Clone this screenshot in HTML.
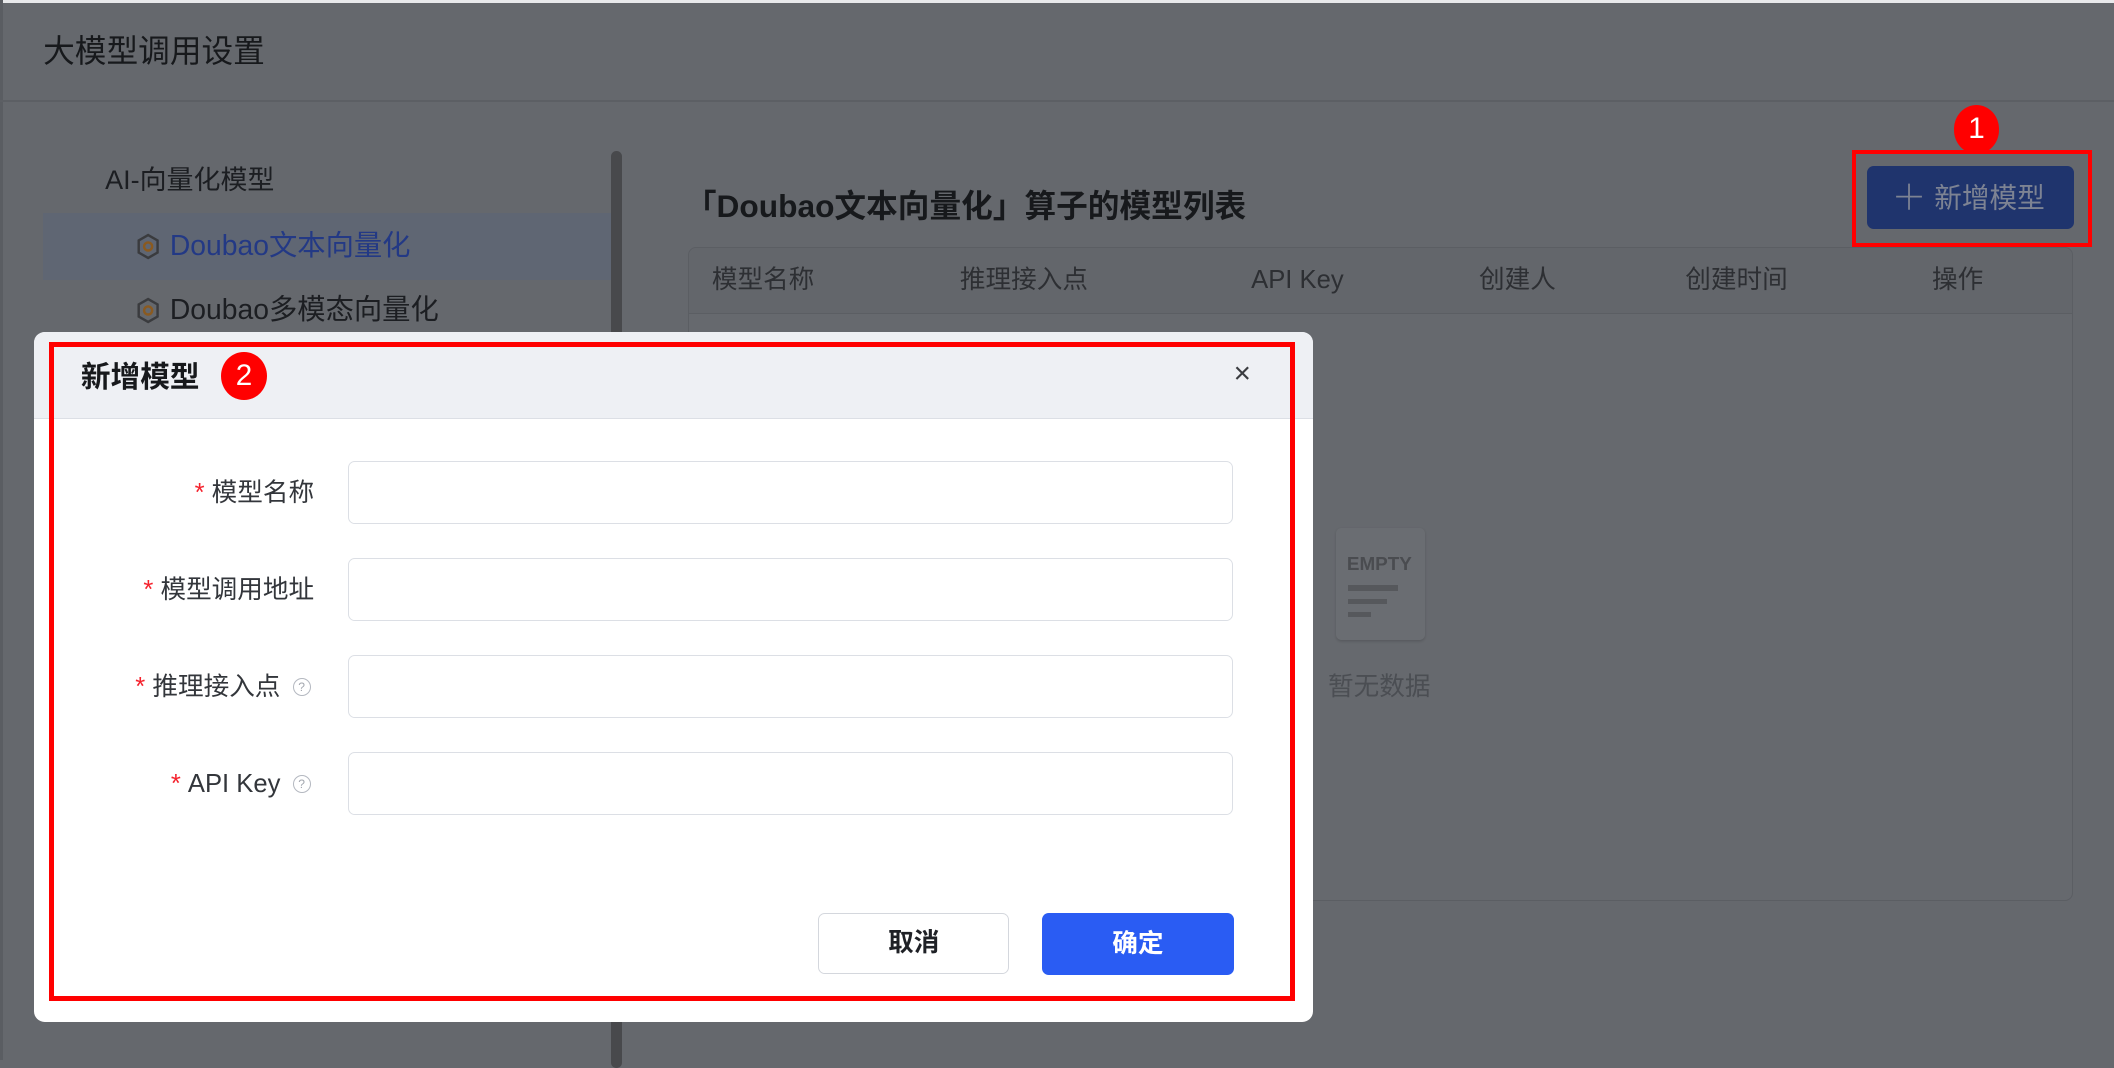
<!DOCTYPE html>
<html><head><meta charset="utf-8"><style>
html,body{margin:0;padding:0;}
body{width:1568px;height:786px;zoom:1.34821;overflow:hidden;position:relative;background:#65686d;font-family:"Liberation Sans","Noto Sans CJK SC",sans-serif;color:#1f2126;line-height:1.2;}
.a{position:absolute;}
.t{white-space:nowrap;}
.lbl{position:absolute;right:1335px;font-size:19px;color:#33363b;white-space:nowrap;line-height:24px;}
</style></head><body>
<div class="a" style="left:0;top:0;width:1568px;height:2px;background:#e8e9eb"></div>
<div class="a" style="left:0;top:0;width:2px;height:786px;background:#5a5d62"></div>
<div class="a t" style="left:32px;top:24px;font-size:23.5px;color:#17191c">大模型调用设置</div>
<div class="a" style="left:0;top:74px;width:1568px;height:2px;background:#5c5f64"></div>
<!-- sidebar -->
<div class="a t" style="left:78px;top:122px;font-size:20px;color:#1c1e22">AI-向量化模型</div>
<div class="a" style="left:32px;top:158px;width:421px;height:50px;background:#5f6673"></div>
<svg class="a" style="left:101px;top:173px" width="18" height="20" viewBox="0 0 18 20"><path d="M9 1.5L16 5.5V14.5L9 18.5L2 14.5V5.5Z" fill="none" stroke="#3a3b3e" stroke-width="1.8"/><circle cx="9" cy="10" r="3" fill="none" stroke="#8a5a20" stroke-width="1.8"/></svg>
<div class="a t" style="left:126px;top:170px;font-size:21px;color:#233985">Doubao文本向量化</div>
<svg class="a" style="left:101px;top:220px" width="18" height="20" viewBox="0 0 18 20"><path d="M9 1.5L16 5.5V14.5L9 18.5L2 14.5V5.5Z" fill="none" stroke="#3a3b3e" stroke-width="1.8"/><circle cx="9" cy="10" r="3" fill="none" stroke="#8a5a20" stroke-width="1.8"/></svg>
<div class="a t" style="left:126px;top:217px;font-size:21px;color:#1c1e22">Doubao多模态向量化</div>
<div class="a" style="left:453px;top:112px;width:8px;height:680px;background:#48494c;border-radius:4px"></div>
<!-- right -->
<div class="a t" style="left:508px;top:139px;font-size:23.5px;font-weight:bold;color:#17191c">「Doubao文本向量化」算子的模型列表</div>
<div class="a" style="left:1385px;top:123px;width:153px;height:47px;background:#1f346d;border-radius:5px"></div>
<div class="a t" style="left:1403px;top:132px;font-size:20.5px;color:#7d8393"><span style="font-size:26px;font-weight:300;vertical-align:-2px">＋</span>&nbsp;新增模型</div>
<div class="a" style="left:1374px;top:111px;width:172px;height:66px;border:3px solid #ff0000"></div>
<div class="a" style="left:1449px;top:78px;width:34px;height:36px;border-radius:50%;background:#ff0000;color:#fff;font-size:22px;text-align:center;line-height:36px">1</div>
<div class="a" style="left:510px;top:183px;width:1026px;height:484px;border:1px solid #5b5e63;border-radius:6px;background:#66696e"></div>
<div class="a" style="left:511px;top:184px;width:1026px;height:48px;background:#63666b;border-bottom:1px solid #5b5e63;border-radius:6px 6px 0 0"></div>
<div class="a t" style="left:528px;top:196px;font-size:19px;line-height:24px;color:#2d2f33">模型名称</div>
<div class="a t" style="left:712px;top:196px;font-size:19px;line-height:24px;color:#2d2f33">推理接入点</div>
<div class="a t" style="left:928px;top:196px;font-size:19px;line-height:24px;color:#2d2f33">API Key</div>
<div class="a t" style="left:1097px;top:196px;font-size:19px;line-height:24px;color:#2d2f33">创建人</div>
<div class="a t" style="left:1250px;top:196px;font-size:19px;line-height:24px;color:#2d2f33">创建时间</div>
<div class="a t" style="left:1433px;top:196px;font-size:19px;line-height:24px;color:#2d2f33">操作</div>
<div class="a" style="left:991px;top:392px;width:66px;height:83px;background:#6a6d72;border-radius:4px;box-shadow:0 1px 2px rgba(0,0,0,.15)"></div>
<div class="a t" style="left:999px;top:410px;font-size:14px;font-weight:bold;color:#4a4c50">EMPTY</div>
<div class="a" style="left:1000px;top:434px;width:37px;height:4px;background:#56585c"></div>
<div class="a" style="left:1000px;top:444px;width:29px;height:4px;background:#56585c"></div>
<div class="a" style="left:1000px;top:454px;width:17px;height:4px;background:#56585c"></div>
<div class="a t" style="left:985px;top:498px;font-size:19px;line-height:24px;color:#4b4e53">暂无数据</div>
<!-- modal -->
<div class="a" style="left:25px;top:246px;width:949px;height:512px;background:#fff;border-radius:8px;overflow:hidden">
 <div style="height:64px;background:#eef0f4;border-bottom:1px solid #dcdfe5"></div>
</div>
<div class="a t" style="left:60px;top:266px;font-size:22px;line-height:28px;font-weight:bold;color:#17191c">新增模型</div>
<div class="a" style="left:164px;top:261px;width:34px;height:36px;border-radius:50%;background:#ff0000;color:#fff;font-size:22px;text-align:center;line-height:36px">2</div>
<div class="a t" style="left:915px;top:264px;font-size:22px;color:#3a3c40">×</div>
<div class="a" style="left:36px;top:254px;width:917px;height:481px;border:4px solid #ff0000"></div>
<!-- form -->
<div class="lbl" style="top:354px"><span style="color:#f5222d">*</span>&nbsp;模型名称</div>
<div class="lbl" style="top:426px"><span style="color:#f5222d">*</span>&nbsp;模型调用地址</div>
<div class="lbl" style="top:498px;right:1360px"><span style="color:#f5222d">*</span>&nbsp;推理接入点</div>
<div class="lbl" style="top:570px;right:1360px"><span style="color:#f5222d">*</span>&nbsp;API Key</div>
<div class="a" style="left:217px;top:503px;width:12px;height:12px;border:1px solid #b4b8c0;border-radius:50%;font-size:9px;color:#a4a8b0;text-align:center;line-height:12px">?</div>
<div class="a" style="left:217px;top:575px;width:12px;height:12px;border:1px solid #b4b8c0;border-radius:50%;font-size:9px;color:#a4a8b0;text-align:center;line-height:12px">?</div>
<div class="a" style="left:258px;top:342px;width:655px;height:45px;border:1px solid #dcdfe5;border-radius:5px"></div>
<div class="a" style="left:258px;top:414px;width:655px;height:45px;border:1px solid #dcdfe5;border-radius:5px"></div>
<div class="a" style="left:258px;top:486px;width:655px;height:45px;border:1px solid #dcdfe5;border-radius:5px"></div>
<div class="a" style="left:258px;top:558px;width:655px;height:45px;border:1px solid #dcdfe5;border-radius:5px"></div>
<div class="a" style="left:607px;top:677px;width:140px;height:44px;border:1px solid #d4d7dd;border-radius:5px;text-align:center;line-height:44px;font-size:19px;font-weight:bold;color:#1f2126">取消</div>
<div class="a" style="left:773px;top:677px;width:142px;height:46px;background:#2a5cf3;border-radius:5px;text-align:center;line-height:46px;font-size:19px;font-weight:bold;color:#fff">确定</div>
</body></html>
